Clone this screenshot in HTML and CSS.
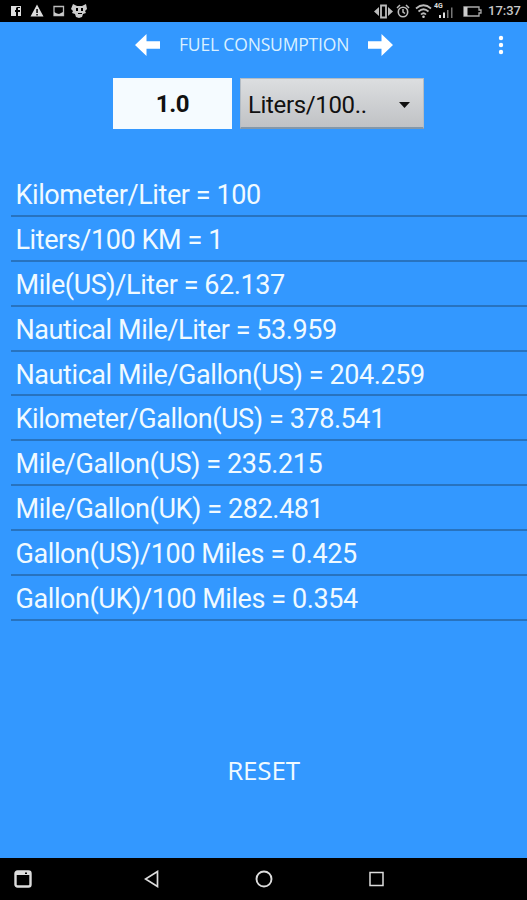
FILE: index.html
```html
<!DOCTYPE html>
<html>
<head>
  <meta charset="utf-8">
  <title>Fuel Consumption</title>
  <link rel="stylesheet" href="styles.css">
</head>
<body>
  <div id="statusbar">
    <svg class="notifications" width="90" height="22" viewBox="0 0 90 22">
      <path fill="#ddd" d="M11 6h10v10h-3v-4h2v-2h-2V8h2V7h-3l-1 1v2h-1v2h1v4h-5z"/>
      <path fill="#ddd" fill-rule="evenodd" d="M37 4.500l6.500 12h-13zM36.300 9v4h1.500V9zM36.300 14v1.500h1.500V14z"/>
      <path fill="none" stroke="#bbb" stroke-width="1.300" d="M54 6.500h9.500v9H54z"/>
      <path fill="#ccc" d="M54 15.500V12l3 1.500 2 .5 4-2v3.500z"/>
      <path fill="#ccc" fill-rule="evenodd" d="M73 4l4 2h5l4-2 1 5-2 2 1 2-3 1-1 3-3 1-3-1-1-3-3-1 1-2-2-2zM76 8v3h2V8zM81 8v3h2V8zM78 13v1h4v-1z"/>
    </svg>
    <svg class="signals" width="112" height="22" viewBox="0 0 112 22">
      <path fill="none" stroke="#bbb" stroke-width="1.800" d="M7 5.500h5v12H7z"/>
      <path fill="#bbb" d="M5 7v9l-5-4.500zM14 7v9l5-4.500z"/>
      <circle cx="29" cy="12" r="4.700" fill="none" stroke="#bbb" stroke-width="1.600"/>
      <path fill="none" stroke="#bbb" stroke-width="1.500" d="M23 8l3-3M32 5l3 3M29 9v3l2 1.500"/>
      <path fill="none" stroke="#bbb" stroke-width="1.700" d="M42 8.500q7.500-6.500 15 0M44.500 11.500q5-4.500 10 0M47 14.500q2.500-2.500 5 0"/>
      <circle cx="49.500" cy="16.700" r="1.300" fill="#ccc"/>
      <text class="network" x="60" y="8">4G</text>
      <path fill="#ddd" d="M65 15h2v3h-2zM69 12.500h2V18h-2z"/>
      <path fill="#777" d="M73 10h1.500v8H73zM77 7.500h1.500V18H77z"/>
      <path fill="none" stroke="#aaa" stroke-width="1.300" d="M90 7h15v3h2v3h-2v3H90z"/>
      <path fill="#ccc" d="M90 7h3.500v9H90z"/>
    </svg>
    <span id="clock">17:37</span>
  </div>

  <div id="header">
    <svg class="seta" width="26" height="24" viewBox="0 0 26 24">
      <path fill="#fff" d="M0 12L11.500 1v7.300H25v7.400H11.500V23z"/>
    </svg>
    <h1 id="titulo">FUEL CONSUMPTION</h1>
    <svg class="seta" width="26" height="24" viewBox="0 0 26 24">
      <path fill="#fff" d="M25 12L13.500 1v7.300H0v7.400h13.500V23z"/>
    </svg>
    <svg id="menu" width="6" height="20" viewBox="0 0 6 20">
      <circle cx="3" cy="3" r="2.200" fill="#fff"/>
      <circle cx="3" cy="10" r="2.200" fill="#fff"/>
      <circle cx="3" cy="17" r="2.200" fill="#fff"/>
    </svg>
  </div>

  <div id="entrada">
    <div id="valor">1.0</div>
    <div id="unidade">
      <span>Liters/100..</span>
      <svg width="11" height="6" viewBox="0 0 11 6"><path fill="#111" d="M0 0h11L5.500 6z"/></svg>
    </div>
  </div>

  <ul id="resultados">
    <li><span>Kilometer/Liter = 100</span></li>
    <li><span>Liters/100 KM = 1</span></li>
    <li><span>Mile(US)/Liter = 62.137</span></li>
    <li><span>Nautical Mile/Liter = 53.959</span></li>
    <li><span>Nautical Mile/Gallon(US) = 204.259</span></li>
    <li><span>Kilometer/Gallon(US) = 378.541</span></li>
    <li><span>Mile/Gallon(US) = 235.215</span></li>
    <li><span>Mile/Gallon(UK) = 282.481</span></li>
    <li><span>Gallon(US)/100 Miles = 0.425</span></li>
    <li><span>Gallon(UK)/100 Miles = 0.354</span></li>
  </ul>

  <div id="reset">RESET</div>

  <div id="navbar">
    <svg width="18" height="18" viewBox="0 0 18 18">
      <rect x="1.500" y="1.500" width="15" height="15" rx="2" fill="none" stroke="#ddd" stroke-width="2.400"/>
      <path fill="#ddd" d="M2 2h14v3H2z"/>
      <path fill="#000" d="M11 2.500h2v1.500h-2z"/>
    </svg>
    <svg width="15" height="18" viewBox="0 0 15 18">
      <path fill="none" stroke="#ddd" stroke-width="1.700" d="M13.500 1.500v15L1.500 9z"/>
    </svg>
    <svg width="18" height="18" viewBox="0 0 18 18">
      <circle cx="9" cy="9" r="7.500" fill="none" stroke="#ddd" stroke-width="1.900"/>
    </svg>
    <svg width="15" height="18" viewBox="0 0 15 18">
      <path fill="none" stroke="#ddd" stroke-width="1.500" d="M1 2.500h13v13H1z"/>
    </svg>
  </div>
</body>
</html>
```
FILE: styles.css
```css
* {
  box-sizing: border-box;
}

body {
  display: flex;
  flex-direction: column;
  width: 527px;
  height: 900px;
  margin: 0;
  overflow: hidden;
  background-color: #3398ff;
  font-family: Roboto, sans-serif;
  color: #f0faff;
}

svg {
  display: block;
  flex-shrink: 0;
}

#statusbar {
  display: flex;
  align-items: center;
  height: 22px;
  padding-right: 6px;
  background-color: #000;
}
.signals {
  margin-left: auto;
}
.network {
  font-size: 7px;
  font-weight: 700;
  fill: #ddd;
}
#clock {
  width: 33px;
  margin-left: 2px;
  font-size: 13px;
  font-weight: 500;
  line-height: 22px;
  text-align: right;
  white-space: nowrap;
  color: #c8c8c8;
}

#header {
  display: flex;
  align-items: center;
  height: 46px;
  padding: 0 23px 0 135px;
}
#titulo {
  width: 171px;
  margin: 0 18px;
  padding-bottom: 2px;
  font-family: "Open Sans", "Noto Sans", sans-serif;
  font-size: 17.500px;
  font-weight: 400;
  line-height: 24px;
  letter-spacing: -0.170px;
  white-space: nowrap;
  color: #d9f0ff;
}
#menu {
  margin-left: auto;
}

#entrada {
  display: flex;
  height: 51px;
  margin: 10px 0 0 113px;
  font-size: 24px;
  letter-spacing: -0.350px;
  color: #111;
}
#valor {
  width: 119px;
  height: 51px;
  background-color: #f5fbff;
  font-weight: 700;
  line-height: 52px;
  text-align: center;
}
#unidade {
  display: flex;
  align-items: center;
  justify-content: space-between;
  width: 184px;
  margin-left: 8px;
  padding: 3px 13px 0 7px;
  border: 1px solid #b4bcc4;
  border-bottom: 2px solid #8297aa;
  background: linear-gradient(#dcdee0, #c0c2c5);
}

#resultados {
  list-style: none;
  margin: 43px 0 0 11px;
  padding: 0;
}
#resultados li {
  height: 44.900px;
  padding-left: 4.500px;
  border-bottom: 2px solid #2873bf;
  font-size: 27px;
  line-height: 47px;
  letter-spacing: -0.420px;
  white-space: nowrap;
}

#reset {
  margin-top: 131px;
  font-family: "Open Sans", "Noto Sans", sans-serif;
  font-size: 26px;
  line-height: 36px;
  letter-spacing: -0.200px;
  text-align: center;
}

#navbar {
  display: flex;
  align-items: center;
  height: 42px;
  margin-top: auto;
  padding-left: 14px;
  background-color: #000;
}
#navbar svg + svg {
  margin-left: 112px;
}
#navbar svg:nth-child(3) {
  margin-left: 96px;
}
#navbar svg:nth-child(4) {
  margin-left: 96px;
}
```
